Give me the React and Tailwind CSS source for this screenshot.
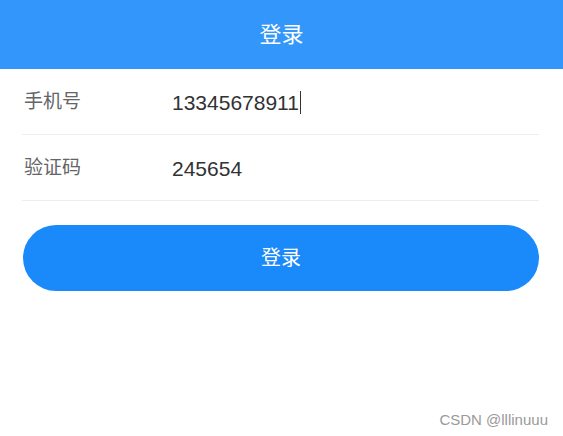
import React, { useState } from "react";

const font = { fontFamily: '"Liberation Sans", "Noto Sans CJK SC", sans-serif' };

const Field = ({ label, value, caret }) => (
  <div className="flex items-center h-[66px] border-b border-[#ebedf0]">
    <span className="w-[150px] pl-[2px] pt-[2px] text-[19px] text-[#646566]">{label}</span>
    <span className="flex items-center pt-[2px] text-[21px] text-[#323233]">
      {value}
      {caret && <span className="ml-[1px] inline-block w-[1px] h-[23px] bg-[#323233]" />}
    </span>
  </div>
);

const App = () => {
  const [phone] = useState("13345678911");
  const [code] = useState("245654");

  return (
    <div className="relative w-[563px] h-[436px] bg-white" style={font}>
      <div className="h-[69px] bg-[#3396fa] flex items-center justify-center">
        <h1 className="text-white text-[22px]">登录</h1>
      </div>
      <div className="pl-[22px] pr-[24px]">
        <Field label="手机号" value={phone} caret />
        <Field label="验证码" value={code} />
        <button className="mt-[24px] ml-[1px] w-[516px] h-[66px] rounded-full bg-[#1a89fa] text-white text-[20px]">
          登录
        </button>
      </div>
      <div className="absolute right-[15px] bottom-[5px] text-[15px] text-[#9a9a9a]">
        CSDN @lllinuuu
      </div>
    </div>
  );
};

export default App;
